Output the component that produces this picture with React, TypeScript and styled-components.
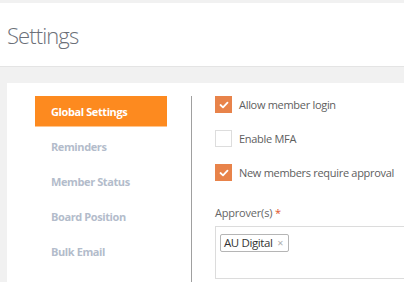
import React from "react";
import styled, { createGlobalStyle } from "styled-components";

const GlobalStyle = createGlobalStyle`
  html, body {
    margin: 0;
    padding: 0;
    background: #f1f1f1;
    font-family: "Open Sans", "Liberation Sans", sans-serif;
    overflow: hidden;
  }
`;

const Page = styled.div`
  padding-top: 3px;
`;

const Header = styled.div`
  height: 63px;
  background: #ffffff;
  border-bottom: 1px solid #e4e4e4;
  display: flex;
  align-items: center;
  padding-left: 7px;
`;

const Title = styled.h1`
  margin: 0;
  font-size: 22px;
  font-weight: 300;
  letter-spacing: -0.9px;
  color: #6b6f78;
`;

const Body = styled.div`
  padding: 16px 0 0 7px;
`;

const Card = styled.div`
  background: #ffffff;
  display: flex;
  padding: 13px 0 0 28px;
  min-height: 200px;
`;

const Nav = styled.ul`
  list-style: none;
  margin: 0;
  padding: 0;
  width: 132px;
`;

const NavItem = styled.li<{ $active?: boolean }>`
  height: 31px;
  margin-bottom: 4px;
  display: flex;
  align-items: center;
  padding-left: 16px;
  font-size: 11px;
  font-weight: 700;
  letter-spacing: -0.4px;
  color: ${(p) => (p.$active ? "#ffffff" : "#b3bccb")};
  background: ${(p) => (p.$active ? "#fd8a1f" : "transparent")};
  border-bottom: 1px solid ${(p) => (p.$active ? "#ffc58d" : "transparent")};
  box-sizing: border-box;
`;

const Divider = styled.div`
  width: 1px;
  background: #a0a0a0;
  margin-left: 24px;
  align-self: stretch;
`;

const Content = styled.div`
  padding-left: 23px;
  flex: 1;
`;

const CheckRow = styled.label`
  display: flex;
  align-items: center;
  height: 17px;
  margin-bottom: 17px;
  font-size: 11px;
  letter-spacing: -0.3px;
  color: #5e5e5e;
`;

const Box = styled.span<{ $on?: boolean }>`
  width: 17px;
  height: 17px;
  box-sizing: border-box;
  margin-right: 7px;
  display: flex;
  align-items: center;
  justify-content: center;
  background: ${(p) => (p.$on ? "#e8834a" : "#ffffff")};
  border: 1px solid ${(p) => (p.$on ? "#e8834a" : "#dddddd")};
`;

const FieldLabel = styled.div`
  font-size: 11px;
  letter-spacing: -0.2px;
  color: #666666;
  margin-top: 24px;
  margin-bottom: 6px;
`;

const Star = styled.span`
  color: #e0532a;
`;

const Select = styled.div`
  border: 1px solid #dcdcdc;
  border-right: none;
  height: 53px;
  box-sizing: border-box;
  padding: 3px 4px;
`;

const Tag = styled.span`
  display: inline-flex;
  align-items: center;
  height: 18px;
  box-sizing: border-box;
  padding: 0 4px 0 3px;
  border: 1px solid #b5b5b5;
  border-radius: 2px;
  font-size: 11.5px;
  letter-spacing: -0.4px;
  color: #333333;
  gap: 5px;
`;

const TagX = styled.span`
  font-size: 8px;
  color: #b0b0b0;
`;

const Check = () => (
  <svg width="10" height="8" viewBox="0 0 10 8">
    <path d="M1.5 4 L4 6.3 L8.5 1.6" fill="none" stroke="#fff" strokeWidth="1.8" strokeLinecap="round" strokeLinejoin="round" />
  </svg>
);

const navItems = ["Global Settings", "Reminders", "Member Status", "Board Position", "Bulk Email"];

const checks = [
  { label: "Allow member login", on: true },
  { label: "Enable MFA", on: false },
  { label: "New members require approval", on: true },
];

export default function App() {
  return (
    <Page>
      <GlobalStyle />
      <Header>
        <Title>Settings</Title>
      </Header>
      <Body>
        <Card>
          <Nav>
            {navItems.map((n, i) => (
              <NavItem key={n} $active={i === 0}>
                {n}
              </NavItem>
            ))}
          </Nav>
          <Divider />
          <Content>
            {checks.map((c) => (
              <CheckRow key={c.label}>
                <Box $on={c.on}>{c.on && <Check />}</Box>
                {c.label}
              </CheckRow>
            ))}
            <FieldLabel>
              Approver(s) <Star>*</Star>
            </FieldLabel>
            <Select>
              <Tag>
                AU Digital <TagX>✕</TagX>
              </Tag>
            </Select>
          </Content>
        </Card>
      </Body>
    </Page>
  );
}
